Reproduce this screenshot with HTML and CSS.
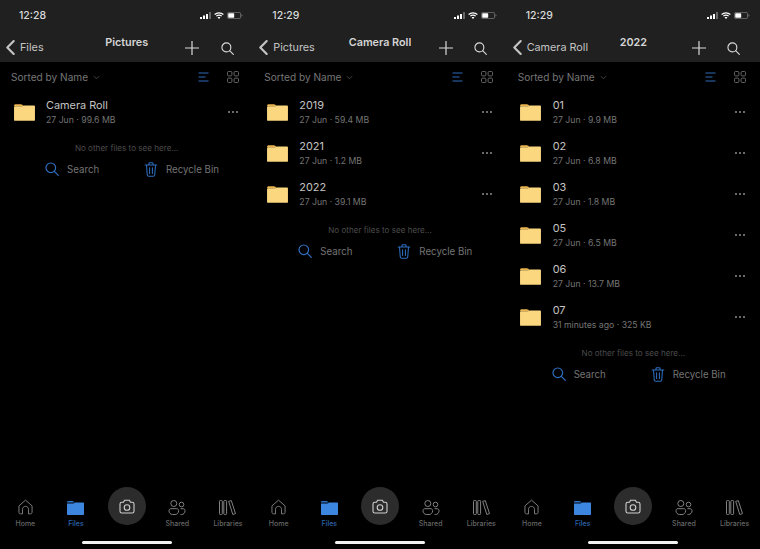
FILE: index.html
```html
<!DOCTYPE html>
<html lang="en">
<head>
<meta charset="utf-8">
<title>Files</title>
<link rel="stylesheet" href="styles.css">
</head>
<body>
<svg class="defs" width="0" height="0" aria-hidden="true">
  <symbol id="i-folder" viewBox="0 0 24 20">
    <path d="M1 3.2C1 2 1.7 1.3 2.8 1.3h5.4c.8 0 1.2.3 1.8.9l1.4 1.3H1z" fill="#e9b44e"/>
    <path d="M1 4.4c0-.6.4-1 1-1h7.5l2-.9H22c.6 0 1 .4 1 1v14.3c0 .6-.4 1-1 1H2c-.6 0-1-.4-1-1z" fill="#fbd77f"/>
  </symbol>
  <symbol id="i-back" viewBox="0 0 12 18"><path d="M9.500 2 2.500 9l7 7" fill="none" stroke="currentColor" stroke-width="2.400" stroke-linecap="round" stroke-linejoin="round"/></symbol>
  <symbol id="i-plus" viewBox="0 0 14 14"><path d="M7 .5v13M.5 7h13" fill="none" stroke="currentColor" stroke-width="1.200" stroke-linecap="round"/></symbol>
  <symbol id="i-search" viewBox="0 0 14 14"><circle cx="5.800" cy="5.800" r="4.800" fill="none" stroke="currentColor" stroke-width="1.200"/><path d="m9.300 9.300 4 4" fill="none" stroke="currentColor" stroke-width="1.200" stroke-linecap="round"/></symbol>
  <symbol id="i-list" viewBox="0 0 11 10"><path d="M.5 1h10M.5 5h7M.5 9h10" fill="none" stroke="currentColor" stroke-width="1"/></symbol>
  <symbol id="i-grid" viewBox="0 0 12 12"><g fill="none" stroke="currentColor" stroke-width="1"><rect x=".5" y=".5" width="4.400" height="4.400" rx="1.100"/><rect x="7.100" y=".5" width="4.400" height="4.400" rx="1.100"/><rect x=".5" y="7.100" width="4.400" height="4.400" rx="1.100"/><rect x="7.100" y="7.100" width="4.400" height="4.400" rx="1.100"/></g></symbol>
  <symbol id="i-trash" viewBox="0 0 14 16"><g fill="none" stroke="currentColor" stroke-width="1.100" stroke-linecap="round" stroke-linejoin="round"><path d="M.8 3.200h12.400M4.800 3V1.800c0-.6.4-1 1-1h2.400c.6 0 1 .4 1 1V3M2.200 3.200l.8 10.600c.1.8.6 1.400 1.500 1.400h5c.9 0 1.400-.6 1.500-1.400l.8-10.600M5.500 6.200v6M8.500 6.200v6"/></g></symbol>
  <symbol id="i-home" viewBox="0 0 16 17"><path d="M1 7.300 8 1.200l7 6.100V14c0 1.100-.7 1.800-1.800 1.800h-2V11c0-1.800-1.400-3.200-3.200-3.200S4.800 9.200 4.800 11v4.800h-2C1.700 15.800 1 15.100 1 14z" fill="none" stroke="currentColor" stroke-width="1"/></symbol>
  <symbol id="i-files" viewBox="0 0 17 14"><path d="M0 1.300C0 .5.500 0 1.300 0h4c.6 0 1 .2 1.400.6l.9.9H0z" fill="#2f73c9"/><path d="M0 2.500h6.500l1.800-1H16c.6 0 1 .4 1 1V13c0 .6-.4 1-1 1H1c-.6 0-1-.4-1-1z" fill="#3c86e0"/></symbol>
  <symbol id="i-camera" viewBox="0 0 16 15"><g fill="none" stroke="currentColor" stroke-width="1.100"><path d="M1 5c0-1.100.7-1.800 1.800-1.800H4.500L5.600 1.200h4.800l1.100 2h1.700c1.100 0 1.800.7 1.800 1.800v7.200c0 1.100-.7 1.800-1.800 1.800H2.800C1.700 14 1 13.300 1 12.200z"/><circle cx="8" cy="8.500" r="2.800"/></g></symbol>
  <symbol id="i-shared" viewBox="0 0 18 15"><g fill="none" stroke="currentColor" stroke-width="1"><circle cx="5.800" cy="3.500" r="3"/><circle cx="13.500" cy="4.500" r="2.300"/><path d="M1 10.500c0-1 .8-1.800 1.800-1.800h6c1 0 1.800.8 1.800 1.800v.5c0 1.900-1.600 3.500-3.500 3.500H4.500C2.600 14.500 1 12.900 1 11zM12.500 8.700h2.700c1 0 1.800.8 1.800 1.800v.5c0 1.900-1.500 3.500-3.500 3.500h-1"/></g></symbol>
  <symbol id="i-lib" viewBox="0 0 17 15"><g fill="none" stroke="currentColor" stroke-width="1"><rect x=".5" y=".5" width="2.800" height="14" rx=".8"/><rect x="4.800" y=".5" width="2.800" height="14" rx=".8"/><path d="M9.700 1.400 12.300.6l4.200 13-2.700.9z"/></g></symbol>
  <symbol id="i-signal" viewBox="0 0 11 7"><g fill="#fff"><rect x="0" y="5" width="2" height="2"/><rect x="3" y="3.500" width="2" height="3.500"/><rect x="6" y="2" width="2" height="5"/></g><rect x="9" y="0" width="2" height="7" fill="#666"/></symbol>
  <symbol id="i-wifi" viewBox="0 0 10 7"><g fill="none" stroke="#fff" stroke-width="1.200"><path d="M.6 2.500c2.500-2.200 6.300-2.200 8.800 0M2.300 4.100c1.500-1.200 3.900-1.200 5.400 0"/></g><path d="m5 7-1.400-1.500c.8-.6 2-.6 2.800 0z" fill="#fff"/></symbol>
  <symbol id="i-batt" viewBox="0 0 16 7"><rect x=".4" y=".4" width="13.200" height="6.200" rx="1.500" fill="none" stroke="#777" stroke-width=".8"/><rect x="1.200" y="1.200" width="6" height="4.600" rx=".8" fill="#fff"/><path d="M14.500 2.500c.6.100 1 .5 1 1s-.4.900-1 1z" fill="#777"/></symbol>
</svg>

<main class="screens">

  <section class="screen">
    <header class="top">
      <div class="status"><span class="time">12:28</span><span class="indicators"><svg class="sig"><use href="#i-signal"/></svg><svg class="wifi"><use href="#i-wifi"/></svg><svg class="batt"><use href="#i-batt"/></svg></span></div>
      <div class="nav">
        <a class="back"><svg class="chev"><use href="#i-back"/></svg>Files</a>
        <h1 class="title">Pictures</h1>
        <svg class="act plus"><use href="#i-plus"/></svg>
        <svg class="act find"><use href="#i-search"/></svg>
      </div>
    </header>
    <div class="sortbar">
      <span class="sort">Sorted by Name<svg class="caret" viewBox="0 0 8 5"><path d="m1 1 3 3 3-3" fill="none" stroke="currentColor" stroke-width=".8"/></svg></span>
      <svg class="view list"><use href="#i-list"/></svg>
      <svg class="view grid"><use href="#i-grid"/></svg>
    </div>
    <ul class="rows">
      <li class="row"><svg class="folder"><use href="#i-folder"/></svg><div class="info"><div class="name">Camera Roll</div><div class="meta">27 Jun · 99.6 MB</div></div><span class="more"><i></i><i></i><i></i></span></li>
    </ul>
    <p class="none">No other files to see here...</p>
    <div class="links">
      <a class="link l-search"><svg class="lk-ic"><use href="#i-search"/></svg>Search</a>
      <a class="link l-bin"><svg class="lk-ic bin"><use href="#i-trash"/></svg>Recycle Bin</a>
    </div>
    <footer class="foot">
      <nav class="tabs">
        <a class="tab"><svg class="t-home"><use href="#i-home"/></svg><span>Home</span></a>
        <a class="tab on"><svg class="t-files"><use href="#i-files"/></svg><span>Files</span></a>
        <a class="tab cam"><span class="disc"><svg class="t-cam"><use href="#i-camera"/></svg></span></a>
        <a class="tab"><svg class="t-shared"><use href="#i-shared"/></svg><span>Shared</span></a>
        <a class="tab"><svg class="t-lib"><use href="#i-lib"/></svg><span>Libraries</span></a>
      </nav>
      <div class="homebar"></div>
    </footer>
  </section>

  <section class="screen">
    <header class="top">
      <div class="status"><span class="time">12:29</span><span class="indicators"><svg class="sig"><use href="#i-signal"/></svg><svg class="wifi"><use href="#i-wifi"/></svg><svg class="batt"><use href="#i-batt"/></svg></span></div>
      <div class="nav">
        <a class="back"><svg class="chev"><use href="#i-back"/></svg>Pictures</a>
        <h1 class="title">Camera Roll</h1>
        <svg class="act plus"><use href="#i-plus"/></svg>
        <svg class="act find"><use href="#i-search"/></svg>
      </div>
    </header>
    <div class="sortbar">
      <span class="sort">Sorted by Name<svg class="caret" viewBox="0 0 8 5"><path d="m1 1 3 3 3-3" fill="none" stroke="currentColor" stroke-width=".8"/></svg></span>
      <svg class="view list"><use href="#i-list"/></svg>
      <svg class="view grid"><use href="#i-grid"/></svg>
    </div>
    <ul class="rows">
      <li class="row"><svg class="folder"><use href="#i-folder"/></svg><div class="info"><div class="name">2019</div><div class="meta">27 Jun · 59.4 MB</div></div><span class="more"><i></i><i></i><i></i></span></li>
      <li class="row"><svg class="folder"><use href="#i-folder"/></svg><div class="info"><div class="name">2021</div><div class="meta">27 Jun · 1.2 MB</div></div><span class="more"><i></i><i></i><i></i></span></li>
      <li class="row"><svg class="folder"><use href="#i-folder"/></svg><div class="info"><div class="name">2022</div><div class="meta">27 Jun · 39.1 MB</div></div><span class="more"><i></i><i></i><i></i></span></li>
    </ul>
    <p class="none">No other files to see here...</p>
    <div class="links">
      <a class="link l-search"><svg class="lk-ic"><use href="#i-search"/></svg>Search</a>
      <a class="link l-bin"><svg class="lk-ic bin"><use href="#i-trash"/></svg>Recycle Bin</a>
    </div>
    <footer class="foot">
      <nav class="tabs">
        <a class="tab"><svg class="t-home"><use href="#i-home"/></svg><span>Home</span></a>
        <a class="tab on"><svg class="t-files"><use href="#i-files"/></svg><span>Files</span></a>
        <a class="tab cam"><span class="disc"><svg class="t-cam"><use href="#i-camera"/></svg></span></a>
        <a class="tab"><svg class="t-shared"><use href="#i-shared"/></svg><span>Shared</span></a>
        <a class="tab"><svg class="t-lib"><use href="#i-lib"/></svg><span>Libraries</span></a>
      </nav>
      <div class="homebar"></div>
    </footer>
  </section>

  <section class="screen">
    <header class="top">
      <div class="status"><span class="time">12:29</span><span class="indicators"><svg class="sig"><use href="#i-signal"/></svg><svg class="wifi"><use href="#i-wifi"/></svg><svg class="batt"><use href="#i-batt"/></svg></span></div>
      <div class="nav">
        <a class="back"><svg class="chev"><use href="#i-back"/></svg>Camera Roll</a>
        <h1 class="title">2022</h1>
        <svg class="act plus"><use href="#i-plus"/></svg>
        <svg class="act find"><use href="#i-search"/></svg>
      </div>
    </header>
    <div class="sortbar">
      <span class="sort">Sorted by Name<svg class="caret" viewBox="0 0 8 5"><path d="m1 1 3 3 3-3" fill="none" stroke="currentColor" stroke-width=".8"/></svg></span>
      <svg class="view list"><use href="#i-list"/></svg>
      <svg class="view grid"><use href="#i-grid"/></svg>
    </div>
    <ul class="rows">
      <li class="row"><svg class="folder"><use href="#i-folder"/></svg><div class="info"><div class="name">01</div><div class="meta">27 Jun · 9.9 MB</div></div><span class="more"><i></i><i></i><i></i></span></li>
      <li class="row"><svg class="folder"><use href="#i-folder"/></svg><div class="info"><div class="name">02</div><div class="meta">27 Jun · 6.8 MB</div></div><span class="more"><i></i><i></i><i></i></span></li>
      <li class="row"><svg class="folder"><use href="#i-folder"/></svg><div class="info"><div class="name">03</div><div class="meta">27 Jun · 1.8 MB</div></div><span class="more"><i></i><i></i><i></i></span></li>
      <li class="row"><svg class="folder"><use href="#i-folder"/></svg><div class="info"><div class="name">05</div><div class="meta">27 Jun · 6.5 MB</div></div><span class="more"><i></i><i></i><i></i></span></li>
      <li class="row"><svg class="folder"><use href="#i-folder"/></svg><div class="info"><div class="name">06</div><div class="meta">27 Jun · 13.7 MB</div></div><span class="more"><i></i><i></i><i></i></span></li>
      <li class="row"><svg class="folder"><use href="#i-folder"/></svg><div class="info"><div class="name">07</div><div class="meta">31 minutes ago · 325 KB</div></div><span class="more"><i></i><i></i><i></i></span></li>
    </ul>
    <p class="none">No other files to see here...</p>
    <div class="links">
      <a class="link l-search"><svg class="lk-ic"><use href="#i-search"/></svg>Search</a>
      <a class="link l-bin"><svg class="lk-ic bin"><use href="#i-trash"/></svg>Recycle Bin</a>
    </div>
    <footer class="foot">
      <nav class="tabs">
        <a class="tab"><svg class="t-home"><use href="#i-home"/></svg><span>Home</span></a>
        <a class="tab on"><svg class="t-files"><use href="#i-files"/></svg><span>Files</span></a>
        <a class="tab cam"><span class="disc"><svg class="t-cam"><use href="#i-camera"/></svg></span></a>
        <a class="tab"><svg class="t-shared"><use href="#i-shared"/></svg><span>Shared</span></a>
        <a class="tab"><svg class="t-lib"><use href="#i-lib"/></svg><span>Libraries</span></a>
      </nav>
      <div class="homebar"></div>
    </footer>
  </section>

</main>
</body>
</html>
```
FILE: styles.css
```css
* { box-sizing: border-box; }
html, body { margin: 0; padding: 0; background: #000; }
body { width: 760px; height: 549px; overflow: hidden; font-family: Inter, "Liberation Sans", sans-serif; color: #d8d8d8; }
.defs { position: absolute; }
.screens { display: grid; grid-template-columns: repeat(3, 253.33px); height: 549px; }
.screen { display: flex; flex-direction: column; height: 549px; min-width: 0; }

.top { background: #202020; height: 62px; }
.status { height: 30px; display: flex; align-items: center; justify-content: space-between; padding: 0 10px 0 19px; }
.time { font-size: 10.5px; font-weight: 500; color: #dcdcdc; }
.indicators { display: flex; align-items: center; gap: 3px; }
.sig { width: 11px; height: 7px; }
.wifi { width: 10px; height: 7px; }
.batt { width: 16px; height: 7px; }

.nav { height: 32px; display: grid; grid-template-columns: 1fr 34px 36px 8px; align-items: center; position: relative; padding-left: 5px; }
.back { display: flex; align-items: center; gap: 4px; font-size: 10.8px; color: #c4c4c4; padding-top: 2px; }
.chev { width: 11px; height: 17px; }
.title { position: absolute; left: 0; right: 0; top: 7px; margin: 0; text-align: center; font-size: 10.8px; line-height: 12px; font-weight: 600; color: #d4d4d4; }
.act { color: #dadada; justify-self: center; margin-top: 4px; }
.plus { width: 14px; height: 14px; }
.find { width: 13px; height: 13px; }

.sortbar { height: 30px; display: flex; align-items: center; padding: 0 14px 0 11px; }
.sort { display: flex; align-items: center; gap: 5px; font-size: 10.1px; color: #767676; margin-right: auto; }
.caret { width: 7px; height: 5px; color: #5e5e5e; }
.view { display: block; }
.list { width: 11px; height: 10px; color: #2f6ab9; }
.grid { width: 12px; height: 12px; color: #666; margin-left: 18px; }

.rows { list-style: none; margin: 0; padding: 0; }
.row { height: 41px; display: flex; align-items: center; padding: 0 15px 0 12.5px; }
.folder { width: 23px; height: 19px; flex: none; }
.info { margin-left: 10.5px; flex: 1; min-width: 0; }
.name { font-size: 10.9px; line-height: 14px; color: #c4c4c4; }
.meta { font-size: 8.7px; line-height: 13px; margin-top: 2px; color: #747474; }
.more { display: flex; gap: 2px; margin-top: -2px; }
.more i { width: 2px; height: 2px; border-radius: 50%; background: #8e8e8e; }

.none { margin: 9px 0 0; text-align: center; font-size: 8.1px; line-height: 12px; color: #4c4c4c; }
.links { display: flex; height: 20px; margin-top: 5px; padding-left: 45px; align-items: center; }
.link { display: flex; align-items: center; font-size: 9.7px; color: #747474; }
.l-search { width: 99px; gap: 8px; }
.l-bin { gap: 8px; }
.lk-ic { width: 14px; height: 14px; color: #2f6fc0; flex: none; }
.bin { height: 15px; }

.foot { margin-top: auto; }
.tabs { display: grid; grid-template-columns: repeat(5, 1fr); height: 50px; }
.tab { display: flex; flex-direction: column; align-items: center; justify-content: flex-end; padding-bottom: 2px; gap: 4px; font-size: 7px; line-height: 9px; font-weight: 500; color: #666; }
.tab svg { color: #828282; }
.tab.on { color: #2c64ad; }
.tab.cam { justify-content: flex-start; padding-top: 7px; }
.disc { width: 38px; height: 38px; border-radius: 50%; background: #2c2c2c; display: flex; align-items: center; justify-content: center; }
.t-home { width: 15px; height: 16px; }
.t-files { width: 17px; height: 14px; }
.t-cam { width: 16px; height: 15px; }
.tab .t-cam { color: #cfcfcf; }
.t-shared { width: 18px; height: 15px; }
.t-lib { width: 17px; height: 15px; }
.homebar { width: 90px; height: 3px; border-radius: 2px; background: #f2f2f2; margin: 11px auto 5px; }
```
